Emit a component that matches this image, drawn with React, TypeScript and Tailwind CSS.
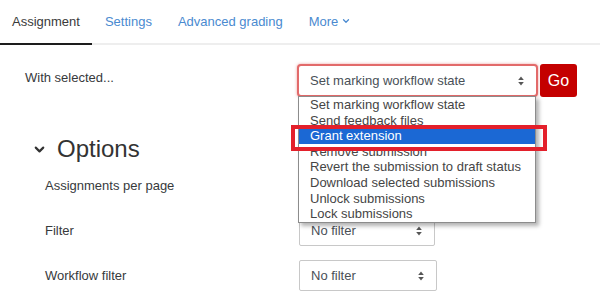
import React from 'react';
import { ChevronDown } from 'lucide-react';

function UpDown() {
  return (
    <svg width="6" height="10" viewBox="0 0 6 10" className="text-[#555]">
      <path d="M3 0.5 L5.8 4 H0.2 Z" fill="currentColor" />
      <path d="M3 9.5 L5.8 6 H0.2 Z" fill="currentColor" />
    </svg>
  );
}

const options = [
  'Set marking workflow state',
  'Send feedback files',
  'Grant extension',
  'Remove submission',
  'Revert the submission to draft status',
  'Download selected submissions',
  'Unlock submissions',
  'Lock submissions',
];

function FilterSelect({ width }: { width: string }) {
  return (
    <div className={`${width} h-[31px] border border-[#c8c8c8] rounded-[2px] bg-white flex items-center justify-between pl-[11px] pr-[12px] text-[#495057]`}>
      <span>No filter</span>
      <UpDown />
    </div>
  );
}

export default function App() {
  return (
    <div className="relative w-[600px] h-[300px] overflow-hidden bg-white text-[13px] text-[#373a3c] font-['Liberation_Sans',Arial,sans-serif]">
      {/* Tabs */}
      <div className="flex h-[45px] border-b-2 border-[#eeeeee]">
        <div className="px-[12px] pt-[12px] h-[45px] border-b-2 border-[#1d1d1d] text-[#3a3a3a]">Assignment</div>
        <div className="px-[13px] pt-[12px] text-[#4a8ad0]">Settings</div>
        <div className="px-[13px] pt-[12px] text-[#4a8ad0]">Advanced grading</div>
        <div className="px-[13px] pt-[12px] text-[#4a8ad0] flex items-start gap-[3px]">
          <span>More</span>
          <ChevronDown size={10} strokeWidth={3} className="mt-[4px]" />
        </div>
      </div>

      {/* Bulk action */}
      <div className="flex items-start pl-[25px] mt-[19px]">
        <div className="w-[272px] pt-[6px] leading-[15px]">With selected...</div>
        <div className="relative">
          <div className="w-[241px] h-[33px] border-2 border-[#e26a6a] rounded-[4px] shadow-[0_0_3px_rgba(220,60,60,0.5)] bg-white flex items-center justify-between pl-[11px] pr-[12px] text-[#495057]">
            <span>Set marking workflow state</span>
            <UpDown />
          </div>
          <div className="absolute top-[32px] left-[1px] w-[238px] z-10 bg-white border border-[#8c8c8c] shadow-[3px_3px_4px_rgba(0,0,0,0.3)]">
            {options.map((o, i) => (
              <div
                key={o}
                className={`h-[15.6px] leading-[15.6px] px-[11px] whitespace-nowrap ${
                  i === 2 ? 'bg-[#1b68d4] text-white' : 'text-[#454545]'
                }`}
              >
                {o}
              </div>
            ))}
          </div>
        </div>
        <button className="ml-[2px] w-[37px] h-[33px] rounded-[3px] bg-[#c40000] text-white text-[16px]">Go</button>
      </div>

      {/* Options */}
      <div className="flex items-center pl-[32px] mt-[38px] h-[28px]">
        <ChevronDown size={15} strokeWidth={3.4} className="text-[#333]" />
        <span className="ml-[10px] text-[24px] text-[#333] leading-[28px]">Options</span>
      </div>

      <div className="pl-[45px]">
        <div className="flex items-center h-[45px]">
          <div className="w-[254px]">Assignments per page</div>
          {/* its select sits under the open menu */}
          <div className="w-[80px] h-[31px] border border-[#c8c8c8] rounded-[2px]" />
        </div>
        <div className="flex items-center h-[45px]">
          <div className="w-[254px]">Filter</div>
          <FilterSelect width="w-[136px]" />
        </div>
        <div className="flex items-center h-[45px]">
          <div className="w-[254px]">Workflow filter</div>
          <FilterSelect width="w-[138px]" />
        </div>
      </div>

      {/* Annotation highlight */}
      <div className="absolute left-[291px] top-[125px] w-[256px] h-[26px] border-4 border-[#e3202b] z-20" />
    </div>
  );
}
